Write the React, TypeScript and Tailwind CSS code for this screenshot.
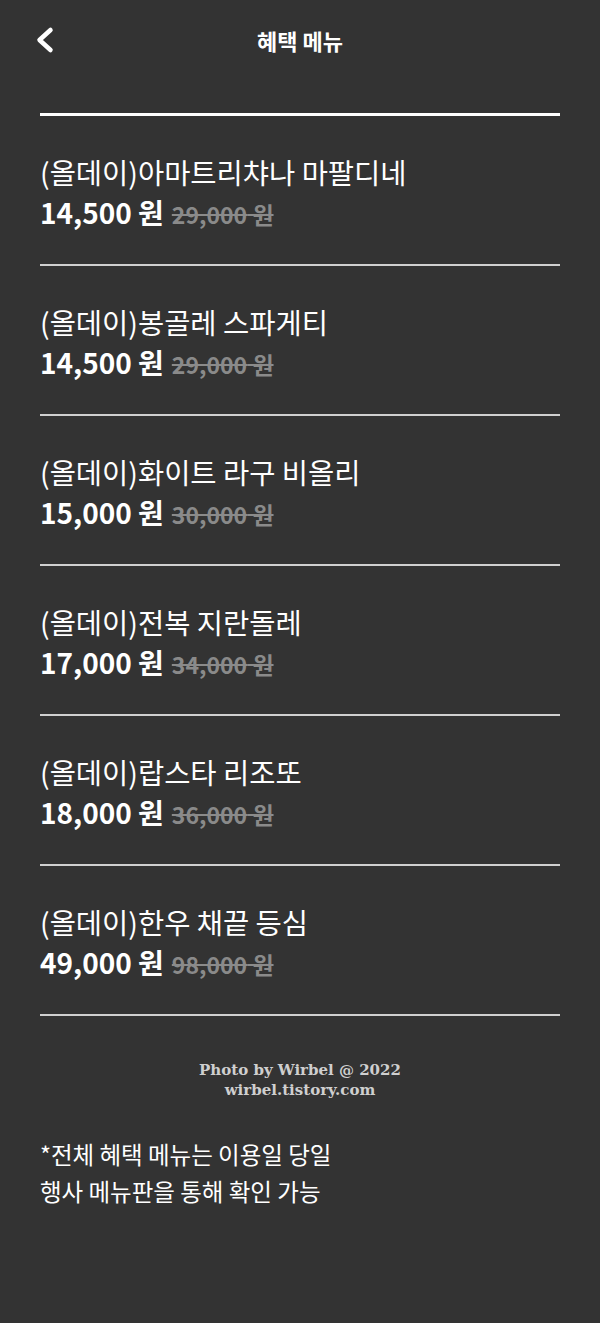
type MenuItem = { name: string; price: string; original: string };

const items: MenuItem[] = [
  { name: "(올데이)아마트리챠나 마팔디네", price: "14,500", original: "29,000" },
  { name: "(올데이)봉골레 스파게티", price: "14,500", original: "29,000" },
  { name: "(올데이)화이트 라구 비올리", price: "15,000", original: "30,000" },
  { name: "(올데이)전복 지란돌레", price: "17,000", original: "34,000" },
  { name: "(올데이)랍스타 리조또", price: "18,000", original: "36,000" },
  { name: "(올데이)한우 채끝 등심", price: "49,000", original: "98,000" },
];

const sans = "font-['Noto_Sans_CJK_KR','Noto_Sans',sans-serif]";

export default function App() {
  return (
    <div className={`min-h-[1323px] w-[600px] bg-[#333333] text-white ${sans}`}>
      <header className="relative flex h-20 items-center justify-center">
        <button type="button" aria-label="뒤로" className="absolute left-[30px] top-5 text-white">
          <svg width="30" height="40" viewBox="0 0 30 40" fill="none">
            <polyline
              points="20.5,10 9.5,20 20.5,30"
              stroke="currentColor"
              strokeWidth="4.5"
              strokeLinecap="round"
              strokeLinejoin="round"
            />
          </svg>
        </button>
        <h1 className="text-[22px] font-bold leading-none">혜택 메뉴</h1>
      </header>

      <div className="mx-10 mt-[33px] h-[3px] bg-white" />

      <ul className="mx-10">
        {items.map((item) => (
          <li key={item.name} className="border-b-2 border-[#d0d0d0] pt-9 pb-8">
            <div className="h-10 text-[28.5px] leading-10">{item.name}</div>
            <div className="flex h-10 items-baseline gap-2 leading-10">
              <span className="text-[28px] font-bold">{item.price} 원</span>
              <span className="text-[23px] font-semibold text-[#8a8a8a] line-through decoration-2">
                {item.original} 원
              </span>
            </div>
          </li>
        ))}
      </ul>

      <div className="mt-11 text-center font-['DejaVu_Serif',serif] text-[15px] font-bold leading-5 text-[#cfcfcf]">
        <p>Photo by Wirbel @ 2022</p>
        <p>wirbel.tistory.com</p>
      </div>

      <div className="mx-10 mt-9 text-[23.5px] leading-[37px]">
        <p>*전체 혜택 메뉴는 이용일 당일</p>
        <p>행사 메뉴판을 통해 확인 가능</p>
      </div>
    </div>
  );
}
